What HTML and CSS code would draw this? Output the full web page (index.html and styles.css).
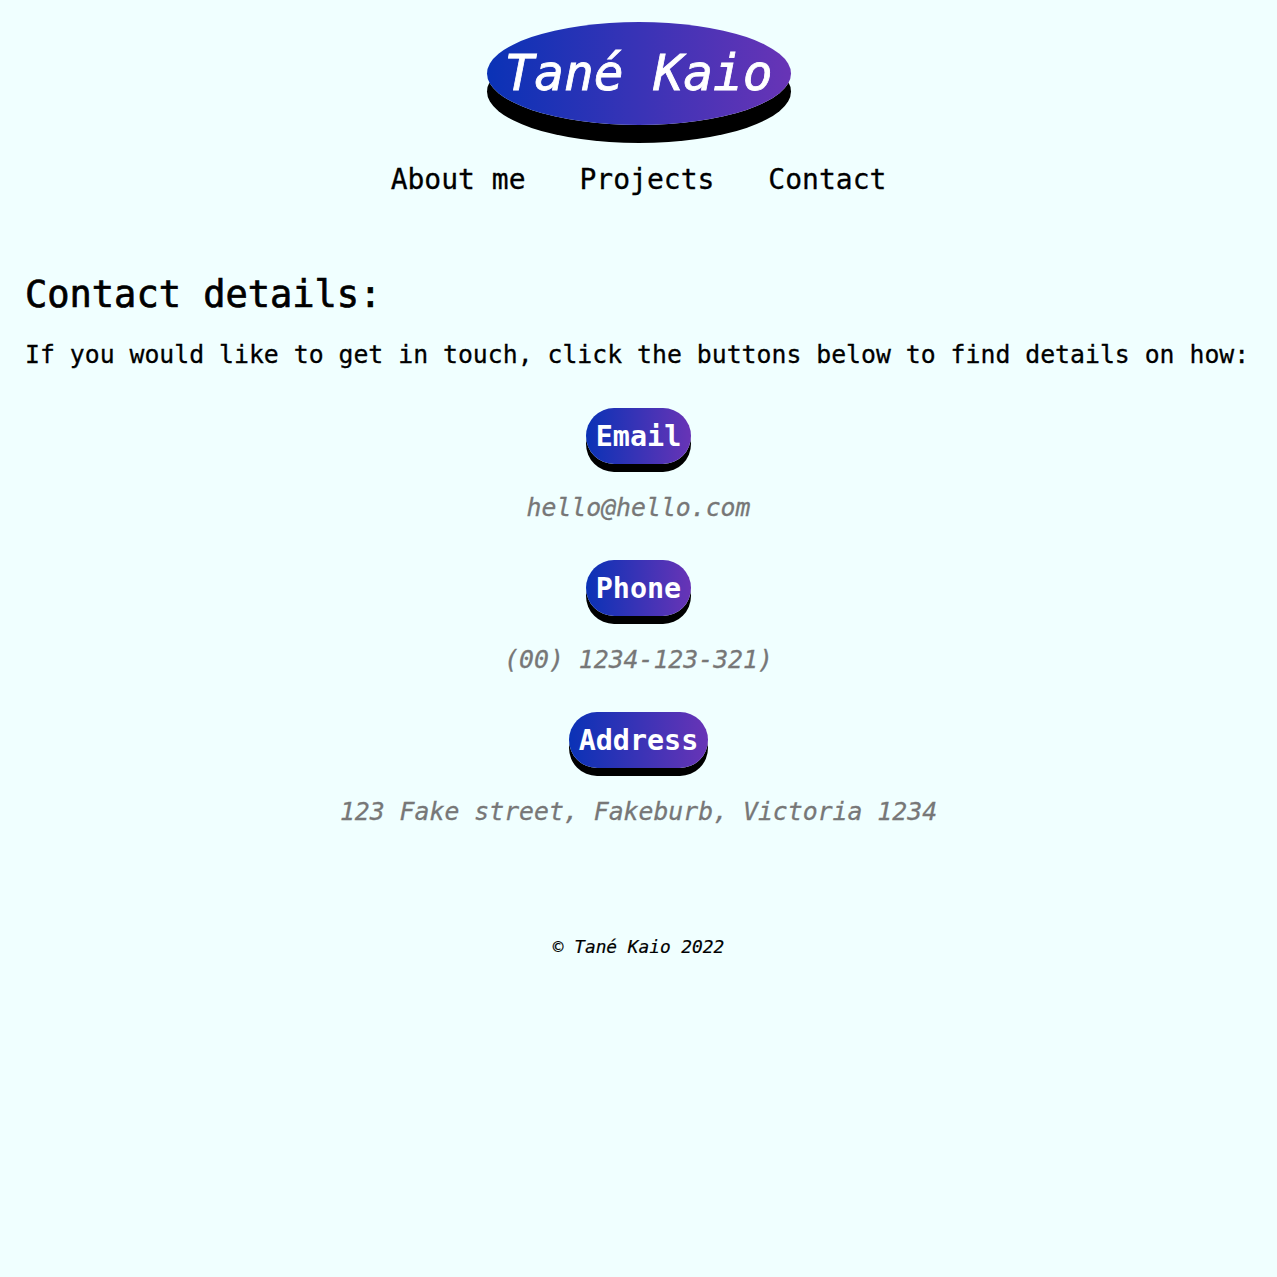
FILE: index.html
```html
<!DOCTYPE html>
<html lang="en">
<head>
<meta charset="utf-8">
<title>Tané Kaio - Contact</title>
<link rel="stylesheet" href="styles.css">
</head>
<body>
<header class="site-header">
  <h1 class="logo">Tané Kaio</h1>
  <nav class="nav">
    <a href="#" class="nav-link">About me</a>
    <a href="#" class="nav-link">Projects</a>
    <a href="#" class="nav-link">Contact</a>
  </nav>
</header>
<main class="content">
  <h2 class="heading">Contact details:</h2>
  <p class="intro">If you would like to get in touch, click the buttons below to find details on how:</p>
  <div class="contact-list">
    <div class="contact-item">
      <button class="pill">Email</button>
      <p class="value">hello@hello.com</p>
    </div>
    <div class="contact-item">
      <button class="pill">Phone</button>
      <p class="value">(00) 1234-123-321)</p>
    </div>
    <div class="contact-item">
      <button class="pill">Address</button>
      <p class="value">123 Fake street, Fakeburb, Victoria 1234</p>
    </div>
  </div>
</main>
<footer class="footer">© Tané Kaio 2022</footer>
</body>
</html>
```
FILE: styles.css
```css
html, body {
  margin: 0;
  padding: 0;
}
body {
  background: #f0ffff;
  color: #000;
  font-family: "DejaVu Sans Mono", "Liberation Mono", monospace;
  padding: 0 25px;
}
.site-header {
  display: flex;
  flex-direction: column;
  align-items: center;
  padding-top: 22px;
}
.logo {
  margin: 0;
  width: 304px;
  height: 103px;
  line-height: 103px;
  text-align: center;
  border-radius: 50%;
  background: linear-gradient(90deg, #0a32b6, #6834b6);
  box-shadow: 0 18px 0 #000;
  color: #fff;
  font-size: 49.5px;
  font-style: italic;
  font-weight: normal;
  -webkit-text-stroke: 0.8px #fff;
}
.nav {
  display: flex;
  gap: 54px;
  margin-top: 38px;
}
.nav-link {
  color: #000;
  text-decoration: none;
  font-size: 28px;
  line-height: 34px;
  -webkit-text-stroke: 0.3px #000;
}
.content {
  margin-top: 76px;
}
.heading {
  margin: 0;
  font-size: 37px;
  line-height: 44px;
  font-weight: normal;
  -webkit-text-stroke: 0.7px #000;
}
.intro {
  margin: 23px 0 0;
  font-size: 24.8px;
  line-height: 30px;
  -webkit-text-stroke: 0.3px #000;
}
.contact-list {
  display: flex;
  flex-direction: column;
  align-items: center;
  margin-top: 38px;
  gap: 37px;
}
.contact-item {
  display: flex;
  flex-direction: column;
  align-items: center;
}
.pill {
  font-family: inherit;
  font-size: 28.4px;
  font-weight: bold;
  color: #fff;
  height: 56px;
  padding: 0 9.5px;
  border: none;
  border-radius: 28px;
  background: linear-gradient(90deg, #0a32b6, #6834b6);
  box-shadow: 0 8px 0 #000;
}
.value {
  margin: 29px 0 0;
  font-size: 24.8px;
  line-height: 30px;
  font-style: italic;
  color: #777;
  -webkit-text-stroke: 0.3px #777;
}
.footer {
  margin-top: 109px;
  text-align: center;
  font-size: 17.8px;
  line-height: 22px;
  font-style: italic;
  -webkit-text-stroke: 0.2px #000;
}
```
